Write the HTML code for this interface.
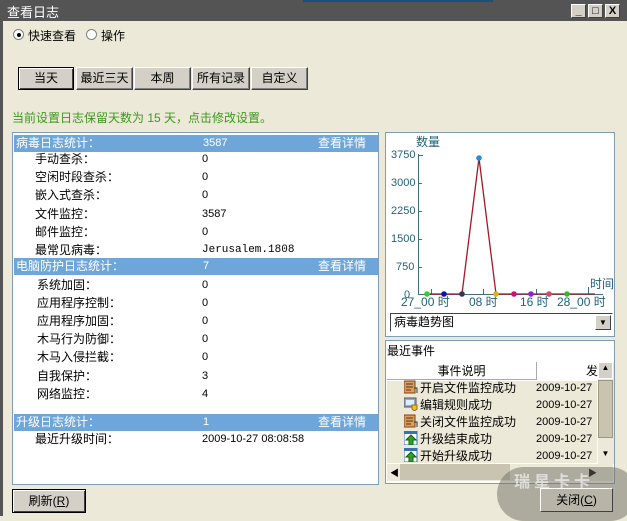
<!DOCTYPE html>
<html><head><meta charset="utf-8"><style>
*{margin:0;padding:0;box-sizing:border-box}
body{width:627px;height:516px;overflow:hidden;background:#ece9d8;font:12px "Liberation Sans","Noto Sans CJK SC",sans-serif;position:relative;color:#000}
.a{position:absolute}
.tb{left:0;top:0;width:627px;height:21px;background:#545454;color:#fff;font-size:13px;padding:2px 0 0 7px}
.wb{width:15px;height:14px;background:#d4d0c8;border:1px solid;border-color:#fff #404040 #404040 #fff;top:4px;font-size:11px;font-weight:bold;text-align:center;line-height:12px}
.btn{height:23px;background:#d4d0c8;border:1px solid;border-color:#fff #404040 #404040 #fff;box-shadow:inset -1px -1px #808080;text-align:center;line-height:21px;top:67px}
.panel{background:#fff;border:1px solid #7f9db9}
.hd{left:1px;width:364px;height:17px;background:#6fa6d9;color:#fff;line-height:17px}
.hd span{position:absolute}
.vl{font-size:11px}
.row{position:absolute;left:0;width:366px;height:18px;line-height:18px}
.ic{display:inline-block;width:14px;height:14px;vertical-align:-2px;margin-right:2px}
</style></head><body>
<div class="a" style="left:0;top:0;width:3px;height:516px;background:#545454"></div>
<div class="a tb">查看日志</div>
<div class="a" style="left:303px;top:0;width:190px;height:2px;background:#1d4f7c"></div>
<div class="a wb" style="left:571px">_</div>
<div class="a wb" style="left:588px">□</div>
<div class="a wb" style="left:605px">X</div>

<div class="a" style="left:13px;top:29px;width:11px;height:11px;border-radius:50%;background:#fff;border:1px solid #808080"></div>
<div class="a" style="left:17px;top:33px;width:4px;height:4px;border-radius:50%;background:#000"></div>
<div class="a" style="left:28px;top:27px">快速查看</div>
<div class="a" style="left:86px;top:29px;width:11px;height:11px;border-radius:50%;background:#fff;border:1px solid #808080"></div>
<div class="a" style="left:101px;top:27px">操作</div>

<div class="a btn" style="left:18px;width:56px;border:1px solid #000;box-shadow:inset 1px 1px #fff,inset -1px -1px #404040">当天</div>
<div class="a btn" style="left:76px;width:57px">最近三天</div>
<div class="a btn" style="left:134px;width:57px">本周</div>
<div class="a btn" style="left:192px;width:58px">所有记录</div>
<div class="a btn" style="left:251px;width:57px">自定义</div>

<div class="a" style="left:12px;top:109px;color:#3a9a1c">当前设置日志保留天数为 15 天，点击修改设置。</div>

<div class="a panel" style="left:12px;top:132px;width:367px;height:353px">
<div class="a hd" style="top:2px"><span style="left:2px">病毒日志统计：</span><span style="left:189px;font-size:11px">3587</span><span style="left:304px">查看详情</span></div>
<div class="row" style="top:17px"><span class="a" style="left:22px">手动查杀：</span><span class="a vl" style="left:189px">0</span></div>
<div class="row" style="top:35px"><span class="a" style="left:22px">空闲时段查杀：</span><span class="a vl" style="left:189px">0</span></div>
<div class="row" style="top:53px"><span class="a" style="left:22px">嵌入式查杀：</span><span class="a vl" style="left:189px">0</span></div>
<div class="row" style="top:72px"><span class="a" style="left:22px">文件监控：</span><span class="a vl" style="left:189px">3587</span></div>
<div class="row" style="top:90px"><span class="a" style="left:22px">邮件监控：</span><span class="a vl" style="left:189px">0</span></div>
<div class="row" style="top:108px"><span class="a" style="left:22px">最常见病毒：</span><span class="a vl" style="left:189px;font-family:'Liberation Mono',monospace">Jerusalem.1808</span></div>
<div class="a hd" style="top:125px"><span style="left:2px">电脑防护日志统计：</span><span style="left:189px;font-size:11px">7</span><span style="left:304px">查看详情</span></div>
<div class="row" style="top:143px"><span class="a" style="left:24px">系统加固：</span><span class="a vl" style="left:189px">0</span></div>
<div class="row" style="top:161px"><span class="a" style="left:24px">应用程序控制：</span><span class="a vl" style="left:189px">0</span></div>
<div class="row" style="top:179px"><span class="a" style="left:24px">应用程序加固：</span><span class="a vl" style="left:189px">0</span></div>
<div class="row" style="top:197px"><span class="a" style="left:24px">木马行为防御：</span><span class="a vl" style="left:189px">0</span></div>
<div class="row" style="top:215px"><span class="a" style="left:24px">木马入侵拦截：</span><span class="a vl" style="left:189px">0</span></div>
<div class="row" style="top:234px"><span class="a" style="left:24px">自我保护：</span><span class="a vl" style="left:189px">3</span></div>
<div class="row" style="top:252px"><span class="a" style="left:24px">网络监控：</span><span class="a vl" style="left:189px">4</span></div>
<div class="a hd" style="top:281px"><span style="left:2px">升级日志统计：</span><span style="left:189px;font-size:11px">1</span><span style="left:304px">查看详情</span></div>
<div class="row" style="top:297px"><span class="a" style="left:22px">最近升级时间：</span><span class="a vl" style="left:189px">2009-10-27 08:08:58</span></div>
</div>

<div class="a panel" style="left:385px;top:132px;width:230px;height:205px"></div>
<svg class="a" style="left:385px;top:132px" width="230" height="180" font-family="Liberation Sans" font-size="11" fill="#1f5f7a">
<text x="31" y="14" font-size="12" font-family="Noto Sans CJK SC">数量</text>
<text x="6" y="26">3750</text><text x="6" y="54">3000</text><text x="6" y="82">2250</text><text x="6" y="110">1500</text><text x="11" y="138">750</text><text x="19" y="166">0</text>
<text x="205" y="156" font-size="12" font-family="Noto Sans CJK SC">时间</text>
<g font-size="12"><text x="16" y="174">27_00 时</text><text x="84" y="174">08 时</text><text x="135" y="174">16 时</text><text x="172" y="174">28_00 时</text></g>
<g stroke="#3d6f80" stroke-width="1"><line x1="33.5" y1="22" x2="33.5" y2="163"/><line x1="33" y1="162.5" x2="218" y2="162.5"/><line x1="33" y1="23.5" x2="38" y2="23.5"/><line x1="33" y1="51.5" x2="37" y2="51.5"/><line x1="33" y1="79.5" x2="37" y2="79.5"/><line x1="33" y1="107.5" x2="37" y2="107.5"/><line x1="33" y1="135.5" x2="37" y2="135.5"/><line x1="46.5" y1="157" x2="46.5" y2="163"/><line x1="98.5" y1="157" x2="98.5" y2="163"/><line x1="151.5" y1="157" x2="151.5" y2="163"/><line x1="203.5" y1="155" x2="203.5" y2="163"/></g>
<polyline points="42,162 77,162 94,26 111,162 210,162" fill="none" stroke="#a01c24" stroke-width="1.3"/>
<circle cx="42" cy="162" r="2.8" fill="#3c3"/><circle cx="59" cy="162" r="2.8" fill="#11a"/><circle cx="77" cy="162" r="2.8" fill="#336"/><circle cx="94" cy="26" r="2.8" fill="#2a8ae0"/><circle cx="111" cy="162" r="2.8" fill="#e0b010"/><circle cx="129" cy="162" r="2.8" fill="#d0107a"/><circle cx="146" cy="162" r="2.8" fill="#9020d0"/><circle cx="164" cy="162" r="2.8" fill="#d04a60"/><circle cx="182" cy="162" r="2.8" fill="#40b030"/>
</svg>
<div class="a" style="left:390px;top:313px;width:223px;height:19px;background:#fff;border:1px solid;border-color:#404040 #fff #fff #404040;padding-left:3px;line-height:17px">病毒趋势图</div>
<div class="a" style="left:595px;top:315px;width:16px;height:15px;background:#d4d0c8;border:1px solid;border-color:#fff #404040 #404040 #fff;font-size:8px;text-align:center;line-height:13px">▼</div>

<div class="a" style="left:385px;top:340px;width:230px;height:144px;background:#fff;border:1px solid #7f9db9"></div>
<div class="a" style="left:387px;top:342px">最近事件</div>
<div class="a" style="left:387px;top:362px;width:150px;height:18px;background:#fff;border-right:1px solid #aaa;border-bottom:1px solid #aaa;text-align:center;line-height:18px">事件说明</div>
<div class="a" style="left:538px;top:362px;width:60px;height:18px;text-align:right;line-height:18px">发</div>
<div class="a" style="left:387px;top:381px;width:210px;height:82px;background:#ece9d8"></div>
<div class="a" style="left:598px;top:362px;width:16px;height:102px;background:#ece9d8"></div>
<div class="a" style="left:598px;top:362px;width:15px;height:17px;background:#d4d0c8;border:1px solid #fff;font-size:8px;text-align:center">▲</div>
<div class="a" style="left:598px;top:380px;width:15px;height:58px;background:#c8c4b0;border:1px solid #9c9880"></div>
<div class="a" style="left:598px;top:449px;width:15px;height:15px;font-size:8px;text-align:center">▼</div>
<div class="a" style="left:387px;top:464px;width:226px;height:17px;background:#ece9d8"></div>
<div class="a" style="left:400px;top:464px;width:110px;height:16px;background:#c8c4b0"></div>
<div class="a" style="left:390px;top:466px;font-size:9px">◀</div>
<div class="a" style="left:588px;top:466px;font-size:9px">▶</div>
<div class="a" style="left:404px;top:380px;line-height:17px">
<div><svg class="ic" viewBox="0 0 14 14"><rect x="0" y="1" width="11" height="12" fill="#d8a060" stroke="#804010"/><path d="M2 4h7M2 7h7M2 10h5" stroke="#603010"/><path d="M10 8l3 0v5" stroke="#333" fill="none"/></svg>开启文件监控成功</div>
<div><svg class="ic" viewBox="0 0 14 14"><rect x="0" y="1" width="12" height="9" fill="#9ab" stroke="#556"/><rect x="2" y="3" width="8" height="5" fill="#def"/><path d="M8 8l5 0v4l-2.5 2l-2.5-2z" fill="#f0c020" stroke="#a07010"/></svg>编辑规则成功</div>
<div><svg class="ic" viewBox="0 0 14 14"><rect x="0" y="1" width="11" height="12" fill="#d8a060" stroke="#804010"/><path d="M2 4h7M2 7h7M2 10h5" stroke="#603010"/><path d="M10 8l3 0v5" stroke="#333" fill="none"/></svg>关闭文件监控成功</div>
<div><svg class="ic" viewBox="0 0 14 14"><rect x="0" y="0" width="13" height="14" fill="#fff" stroke="#3a70b0"/><rect x="0" y="0" width="13" height="3" fill="#3a70b0"/><path d="M7 4l5 5h-3v5h-4v-5h-3z" fill="#30a030" stroke="#106010"/></svg>升级结束成功</div>
<div><svg class="ic" viewBox="0 0 14 14"><rect x="0" y="0" width="13" height="14" fill="#fff" stroke="#3a70b0"/><rect x="0" y="0" width="13" height="3" fill="#3a70b0"/><path d="M7 4l5 5h-3v5h-4v-5h-3z" fill="#30a030" stroke="#106010"/></svg>开始升级成功</div>
</div>
<div class="a" style="left:536px;top:380px;line-height:17px;font-size:11px;width:61px;overflow:hidden;white-space:nowrap"><div>2009-10-27</div><div>2009-10-27</div><div>2009-10-27</div><div>2009-10-27</div><div>2009-10-27</div></div>

<div class="a" style="left:12px;top:489px;width:74px;height:24px;background:#d4d0c8;border:1px solid #000;box-shadow:inset 1px 1px #fff,inset -1px -1px #404040;text-align:center;line-height:22px">刷新(<u>R</u>)</div>
<div class="a" style="left:497px;top:467px;width:140px;height:54px;border-radius:27px;background:rgba(110,110,100,0.5)"></div>
<div class="a" style="left:540px;top:488px;width:73px;height:24px;background:#b8b5a8;border:1px solid;border-color:#fff #404040 #404040 #fff;text-align:center;line-height:22px">关闭(<u>C</u>)</div>
<div class="a" style="left:514px;top:468px;color:rgba(255,255,255,0.6);font-weight:bold;font-size:16px;letter-spacing:4px">瑞星卡卡</div>
</body></html>
